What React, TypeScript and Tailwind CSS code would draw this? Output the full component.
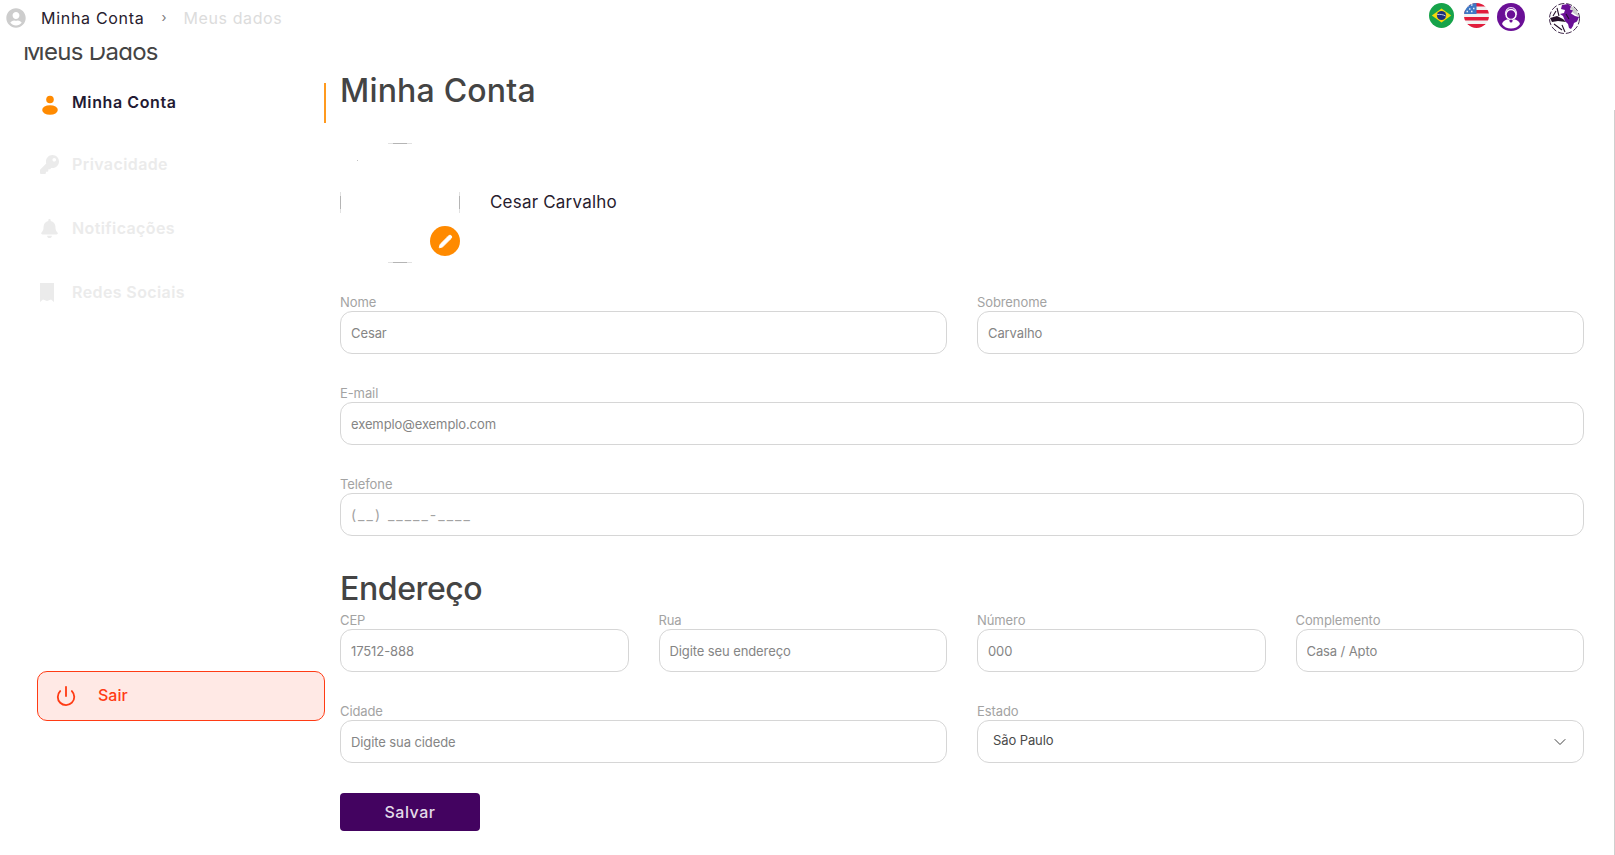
import { ChevronDown, Pencil, Power } from "lucide-react";
import { FaBell, FaKey, FaUserCircle } from "react-icons/fa";

const fieldClass =
  "w-full h-[43px] px-[10px] border border-[#d6d6d6] rounded-[12px] bg-white text-[13px] tracking-[-0.1px] text-[#858585] outline-none";

const labelClass = "block h-[18px] text-[13px] leading-[18px] tracking-[-0.1px] text-[#a3a3a3]";

function Field({ label, value, inputClass }: { label: string; value: string; inputClass?: string }) {
  return (
    <div className="min-w-0">
      <label className={labelClass}>{label}</label>
      <input className={`${fieldClass} ${inputClass ?? ""}`} defaultValue={value} />
    </div>
  );
}

function PersonIcon() {
  return (
    <svg width="18" height="20" viewBox="0 0 18 20" fill="#ff8a00" className="mt-[3px] ml-px">
      <circle cx="9" cy="4.5" r="3.800" />
      <ellipse cx="9" cy="15" rx="7.800" ry="4.800" />
    </svg>
  );
}

function BookmarkIcon() {
  return (
    <svg width="14" height="19" viewBox="0 0 14 19" fill="currentColor">
      <path d="M0 0h14v19l-3-2.500-4 1.500-4-1.500-3 2.500Z" />
    </svg>
  );
}

function BrazilFlag() {
  return (
    <svg width="25" height="25" viewBox="0 0 25 25">
      <circle cx="12.5" cy="12.5" r="12.5" fill="#16a34a" />
      <path d="M2.8 12.5 12.5 5.5 22.2 12.5 12.5 19.5Z" fill="#f4d90b" />
      <circle cx="12.5" cy="12.5" r="4.6" fill="#1e2f7d" />
      <path d="M8.2 11.6c3-.5 6-.1 8.4 1.4" stroke="#e8eef5" strokeWidth="0.8" fill="none" />
    </svg>
  );
}

function UsaFlag() {
  return (
    <svg width="25" height="25" viewBox="0 0 25 25">
      <clipPath id="usa-clip">
        <circle cx="12.5" cy="12.5" r="12.5" />
      </clipPath>
      <g clipPath="url(#usa-clip)">
        <rect width="25" height="25" fill="#f2f2f2" />
        <rect y="0" width="25" height="3.5" fill="#e11d3c" />
        <rect y="7" width="25" height="3.5" fill="#e11d3c" />
        <rect y="14" width="25" height="3.5" fill="#e11d3c" />
        <rect y="21" width="25" height="4" fill="#e11d3c" />
        <rect width="12.5" height="11" fill="#3f78c4" />
        <path d="M3 3h1.5M7 2h1.5M5 6h1.5M9 5.5h1.5M2.5 8.5h1.5M7 8.5h1.5" stroke="#e6eef8" strokeWidth="1.4" />
      </g>
    </svg>
  );
}

function SupportIcon() {
  return (
    <svg width="28" height="28" viewBox="0 0 28 28">
      <circle cx="14" cy="14" r="14" fill="#6a0f96" />
      <circle cx="14" cy="11.500" r="5" fill="none" stroke="#fff" strokeWidth="1.500" />
      <path d="M8.500 12c-.5-4.500 2-7.500 5.500-7.500s6 3 5.500 7.500" fill="none" stroke="#e9d8f2" strokeWidth="1.200" />
      <path d="M5 21c.8-3 3.500-4.500 6-4.800l3 2.300 3-2.300c2.500.3 5.200 1.800 6 4.800-2 3-5.200 4.500-9 4.500S7 24 5 21Z" fill="#fff" />
      <circle cx="14" cy="18" r="1.500" fill="#6a0f96" />
    </svg>
  );
}

function GlobeLogo() {
  return (
    <svg width="31" height="31" viewBox="0 0 31 31">
      <circle cx="15.500" cy="15.500" r="15" fill="#fff" stroke="#2b1238" strokeWidth="0.9" strokeDasharray="6 2" />
      <path d="M21 2.500c4.500 1.500 8 6 8.500 11l-6-4Z" fill="#cccccc" />
      <path d="M13 2l6-1 3 2.500-1 3 3 1-2 3 4 2.500 4 1-2 4.500-3 1.500-1 3-2 3-2-1-1-4-3-3-2-5-3-2 4-1 1-3-4-1Z" fill="#6a0f96" />
      <path d="M1 15l7-2 6 3 3 3-8-1-6 1Z" fill="#241029" />
      <path d="M8 5l2 8M5 21l8 6M13 22l3 7M7 8l-3 5M17 11l3 5" stroke="#241029" strokeWidth="1.100" fill="none" />
    </svg>
  );
}

const navItems = [
  { label: "Privacidade", icon: <FaKey className="size-[19px]" />, spacing: "mt-[21px]" },
  { label: "Notificações", icon: <FaBell className="size-[19px]" />, spacing: "mt-[24px]" },
  { label: "Redes Sociais", icon: <BookmarkIcon />, spacing: "mt-[24px]" },
];

export default function App() {
  return (
    <div className="relative h-screen flex flex-col overflow-hidden bg-white font-['Inter',sans-serif]">
      <header className="h-[47px] shrink-0 flex justify-between pl-[6px] bg-white">
        <div className="h-[36px] flex items-center text-[16px]">
          <FaUserCircle className="size-[20px] text-[#cdcdcd]" />
          <span className="ml-[15px] tracking-[0.7px] text-[#27202e]">Minha Conta</span>
          <span className="ml-[17px] text-[13px] text-[#777]">›</span>
          <span className="ml-[17px] tracking-[0.6px] text-[#dcdcdc]">Meus dados</span>
        </div>
        <div className="flex items-start pt-[3px] pr-[35px]">
          <BrazilFlag />
          <div className="ml-[10px]">
            <UsaFlag />
          </div>
          <div className="ml-[8px]">
            <SupportIcon />
          </div>
          <div className="ml-[24px]">
            <GlobeLogo />
          </div>
        </div>
      </header>

      <div className="flex-1 min-h-0 flex overflow-hidden">
        <aside className="w-[340px] shrink-0 flex flex-col pl-[37px]">
          <h3 className="-mt-[11px] -ml-[14px] h-[32px] text-[24px] leading-[32px] tracking-[-0.7px] text-[#444]">Meus Dados</h3>
          <nav className="mt-[15px] w-[289px] text-[16px] font-semibold">
            <a className="h-[40px] flex items-center border-r-2 border-[#ff9a1f] text-[#231a33]">
              <span className="w-[35px] pl-[3px]">
                <PersonIcon />
              </span>
              <span className="-mt-[2px] tracking-[0.6px]">Minha Conta</span>
            </a>
            {navItems.map((item) => (
              <a key={item.label} className={`h-[40px] flex items-center text-[#ebebeb] ${item.spacing}`}>
                <span className="w-[35px] pl-[3px]">{item.icon}</span>
                <span className="tracking-[0.4px]">{item.label}</span>
              </a>
            ))}
          </nav>
          <button className="mt-[359px] w-[288px] h-[50px] flex items-center pl-[17px] border border-[#ff3b14] rounded-[10px] bg-[#ffe9e5] text-[16px] font-medium text-[#ff3b14]">
            <Power className="size-[22px]" strokeWidth={2} />
            <span className="-mt-[2px] ml-[21px]">Sair</span>
          </button>
        </aside>

        <main className="flex-1 min-w-0 pt-[20px] pr-[31px]">
          <h1 className="h-[48px] text-[32px] leading-[48px] font-medium tracking-[0.2px] text-[#444]">Minha Conta</h1>

          <div className="mt-[28px] flex items-center">
            <div className="relative size-[120px] shrink-0">
              <svg width="120" height="120" viewBox="0 0 120 120">
                <path d="M48 .5h24M48 119.500h24M.5 49v21M119.500 49v21" stroke="#e2e2e2" fill="none" />
                <path d="M53 .5h14M53 119.500h14M.5 53v13M119.500 53v13" stroke="#b5b5b5" fill="none" />
                <rect x="17" y="17" width="1" height="1" fill="#c4c4c4" />
              </svg>
              <span className="absolute right-0 bottom-[7px] size-[30px] flex items-center justify-center rounded-full bg-[#ff8a00]">
                <Pencil className="size-[15px] text-white" fill="#fff" strokeWidth={1.5} />
              </span>
            </div>
            <span className="ml-[30px] text-[17px] tracking-[0.2px] text-[#27202e]">Cesar Carvalho</span>
          </div>

          <form className="mt-[30px]">
            <div className="grid grid-cols-2 gap-x-[30px] gap-y-[30px]">
              <Field label="Nome" value="Cesar" />
              <Field label="Sobrenome" value="Carvalho" />
              <div className="col-span-2">
                <Field label="E-mail" value="exemplo@exemplo.com" />
              </div>
              <div className="col-span-2">
                <Field label="Telefone" value="(__) _____-____" inputClass="text-[14px] tracking-[2px] text-[#a3a3a3]" />
              </div>
            </div>

            <h2 className="mt-[30px] h-[45px] text-[32px] leading-[45px] font-medium tracking-[-0.4px] text-[#444]">Endereço</h2>

            <div className="grid grid-cols-4 gap-x-[30px] gap-y-[30px]">
              <Field label="CEP" value="17512-888" />
              <Field label="Rua" value="Digite seu endereço" />
              <Field label="Número" value="000" />
              <Field label="Complemento" value="Casa / Apto" />
              <div className="col-span-2">
                <Field label="Cidade" value="Digite sua cidede" />
              </div>
              <div className="col-span-2 min-w-0">
                <label className={labelClass}>Estado</label>
                <div className="h-[43px] flex items-center justify-between pl-[15px] pr-[13px] border border-[#d6d6d6] rounded-[12px] text-[13px] tracking-[-0.1px] text-[#4a4a4a]">
                  <span className="-mt-[2px]">São Paulo</span>
                  <ChevronDown className="size-[20px] text-[#444]" strokeWidth={1.2} />
                </div>
              </div>
            </div>

            <button type="button" className="mt-[30px] w-[140px] h-[38px] rounded-[4px] bg-[#430360] text-[16px] font-medium tracking-[0.5px] text-[#e3dbe8]">
              Salvar
            </button>
          </form>
        </main>
      </div>

      <div className="absolute right-0 top-[110px] bottom-0 w-px bg-[#cfcfcf]" />
    </div>
  );
}
